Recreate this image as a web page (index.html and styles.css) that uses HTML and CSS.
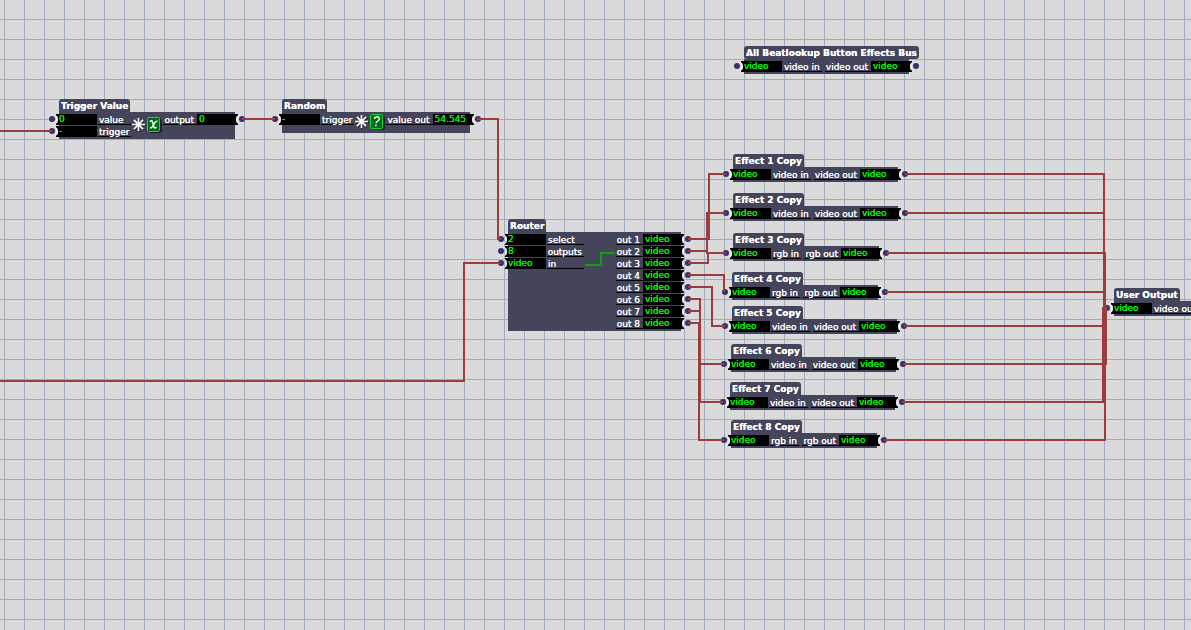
FILE: index.html
```
<!DOCTYPE html>
<html lang="en">
<head>
<meta charset="utf-8">
<title>Patch Editor</title>
<link rel="stylesheet" href="styles.css">
</head>
<body>
<main class="canvas">
  <section class="node trigger-value">
    <h2 class="title">Trigger Value</h2>
    <div class="body">
      <div class="ports in">
        <div class="port"><span class="value">0</span><span class="label">value</span></div>
        <div class="port"><span class="value">-</span><span class="label">trigger</span></div>
      </div>
      <svg class="icons" viewBox="0 0 30 16" aria-hidden="true">
        <path class="star-shadow" d="M8.500 2v13M2 8.500h13M3.900 3.900l9.200 9.200M13.100 3.900l-9.200 9.200"/>
        <path class="star" d="M7.500 1v13M1 7.500h13M2.900 2.900l9.200 9.200M12.100 2.900l-9.200 9.200"/>
        <rect class="chip-shadow" x="18" y="2" width="13" height="14" rx="2"/>
        <rect class="chip" x="16.500" y=".5" width="12" height="14" rx="1"/>
        <path class="glyph" d="M19 4.800c1-1.600 2.200-1.300 2.600.2l1.200 4.800c.4 1.600 1.500 1.600 2.600.2M26.400 4.300c-1.600-.6-2.500.8-3.700 3.100s-2.200 4.100-3.900 3.200"/>
      </svg>
      <div class="ports out">
        <div class="port"><span class="label">output</span><span class="value">0</span></div>
      </div>
    </div>
  </section>

  <section class="node random">
    <h2 class="title">Random</h2>
    <div class="body">
      <div class="ports in">
        <div class="port"><span class="value">-</span><span class="label">trigger</span></div>
      </div>
      <svg class="icons" viewBox="0 0 30 16" aria-hidden="true">
        <path class="star-shadow" d="M8.500 2v13M2 8.500h13M3.900 3.900l9.200 9.200M13.100 3.900l-9.200 9.200"/>
        <path class="star" d="M7.500 1v13M1 7.500h13M2.900 2.900l9.200 9.200M12.100 2.900l-9.200 9.200"/>
        <rect class="chip-shadow" x="18" y="2" width="13" height="14" rx="2"/>
        <rect class="chip" x="16.500" y=".5" width="12" height="14" rx="1"/>
        <path class="glyph" d="M20.500 5c.3-3 5-3 4.800.1c-.2 1.900-2.900 1.900-3.200 4M21.900 10.600v1.600"/>
      </svg>
      <div class="ports out">
        <div class="port"><span class="label">value out</span><span class="value">54.545</span></div>
      </div>
    </div>
  </section>

  <section class="node router">
    <h2 class="title">Router</h2>
    <div class="body">
      <div class="ports in">
        <div class="port"><span class="value">2</span><span class="label">select</span></div>
        <div class="port"><span class="value">8</span><span class="label">outputs</span></div>
        <div class="port"><span class="value">video</span><span class="label">in</span></div>
      </div>
      <div class="ports out">
        <div class="port"><span class="label">out 1</span><span class="value">video</span></div>
        <div class="port"><span class="label">out 2</span><span class="value">video</span></div>
        <div class="port"><span class="label">out 3</span><span class="value">video</span></div>
        <div class="port"><span class="label">out 4</span><span class="value">video</span></div>
        <div class="port"><span class="label">out 5</span><span class="value">video</span></div>
        <div class="port"><span class="label">out 6</span><span class="value">video</span></div>
        <div class="port"><span class="label">out 7</span><span class="value">video</span></div>
        <div class="port"><span class="label">out 8</span><span class="value">video</span></div>
      </div>
    </div>
  </section>

  <section class="node bus">
    <h2 class="title">All Beatlookup Button Effects Bus</h2>
    <div class="body">
      <div class="ports in"><div class="port"><span class="value">video</span><span class="label">video in</span></div></div>
      <div class="ports out"><div class="port"><span class="label">video out</span><span class="value">video</span></div></div>
    </div>
  </section>

  <section class="node effect effect-1">
    <h2 class="title">Effect 1 Copy</h2>
    <div class="body">
      <div class="ports in"><div class="port"><span class="value">video</span><span class="label">video in</span></div></div>
      <div class="ports out"><div class="port"><span class="label">video out</span><span class="value">video</span></div></div>
    </div>
  </section>
  <section class="node effect effect-2">
    <h2 class="title">Effect 2 Copy</h2>
    <div class="body">
      <div class="ports in"><div class="port"><span class="value">video</span><span class="label">video in</span></div></div>
      <div class="ports out"><div class="port"><span class="label">video out</span><span class="value">video</span></div></div>
    </div>
  </section>
  <section class="node effect rgb effect-3">
    <h2 class="title">Effect 3 Copy</h2>
    <div class="body">
      <div class="ports in"><div class="port"><span class="value">video</span><span class="label">rgb in</span></div></div>
      <div class="ports out"><div class="port"><span class="label">rgb out</span><span class="value">video</span></div></div>
    </div>
  </section>
  <section class="node effect rgb effect-4">
    <h2 class="title">Effect 4 Copy</h2>
    <div class="body">
      <div class="ports in"><div class="port"><span class="value">video</span><span class="label">rgb in</span></div></div>
      <div class="ports out"><div class="port"><span class="label">rgb out</span><span class="value">video</span></div></div>
    </div>
  </section>
  <section class="node effect effect-5">
    <h2 class="title">Effect 5 Copy</h2>
    <div class="body">
      <div class="ports in"><div class="port"><span class="value">video</span><span class="label">video in</span></div></div>
      <div class="ports out"><div class="port"><span class="label">video out</span><span class="value">video</span></div></div>
    </div>
  </section>
  <section class="node effect effect-6">
    <h2 class="title">Effect 6 Copy</h2>
    <div class="body">
      <div class="ports in"><div class="port"><span class="value">video</span><span class="label">video in</span></div></div>
      <div class="ports out"><div class="port"><span class="label">video out</span><span class="value">video</span></div></div>
    </div>
  </section>
  <section class="node effect effect-7">
    <h2 class="title">Effect 7 Copy</h2>
    <div class="body">
      <div class="ports in"><div class="port"><span class="value">video</span><span class="label">video in</span></div></div>
      <div class="ports out"><div class="port"><span class="label">video out</span><span class="value">video</span></div></div>
    </div>
  </section>
  <section class="node effect rgb effect-8">
    <h2 class="title">Effect 8 Copy</h2>
    <div class="body">
      <div class="ports in"><div class="port"><span class="value">video</span><span class="label">rgb in</span></div></div>
      <div class="ports out"><div class="port"><span class="label">rgb out</span><span class="value">video</span></div></div>
    </div>
  </section>

  <section class="node user-output">
    <h2 class="title">User Output</h2>
    <div class="body">
      <div class="ports in"><div class="port"><span class="value">video</span><span class="label">video out</span></div></div>
    </div>
  </section>

  <svg class="wires" aria-hidden="true">
    <path d="M0 131H52"/>
    <path d="M0 381H464V263H501"/>
    <path d="M242 119H275"/>
    <path d="M477 119H498V239H501"/>
    <path d="M688 239H709V174H726"/>
    <path d="M688 251H707V213H726"/>
    <path d="M688 263H708V253H726M707 251V254"/>
    <path d="M688 275H724V292"/>
    <path d="M688 287H712V326H725"/>
    <path d="M688 299H700V364H724"/>
    <path d="M688 311H700V402H723"/>
    <path d="M688 323H699V440H724"/>
    <path d="M905 174H1104V308H1107"/>
    <path d="M905 213H1104V308"/>
    <path d="M886 253H1105V308"/>
    <path d="M885 292H1104V308"/>
    <path d="M904 326H1104V308"/>
    <path d="M903 364H1106V308"/>
    <path d="M902 402H1103V308H1107"/>
    <path d="M884 440H1105V308"/>
    <path class="route" d="M585 265H601V253H615"/>
  </svg>
</main>
</body>
</html>
```
FILE: styles.css
```
*, *::before, *::after { box-sizing: border-box; }

body {
  margin: 0;
  overflow: hidden;
  font-family: "DejaVu Sans", Verdana, sans-serif;
  font-size: 9px;
  line-height: 11px;
  color: #fff;
  text-shadow: 0 0 0 currentColor;
}

.canvas {
  position: relative;
  min-height: 100vh;
  overflow: hidden;
  background-color: #dadada;
  background-image:
    linear-gradient(#a0abbe 1px, transparent 1px),
    linear-gradient(90deg, #a0abbe 1px, transparent 1px);
  background-size: 20px 20px;
  background-position: 4px 19px;
}

.node {
  position: absolute;
  display: flex;
  flex-direction: column;
  align-items: flex-start;
}

.title {
  margin: 0;
  padding: 1px 2px 0;
  height: 13px;
  border-radius: 3px 3px 0 0;
  background: #44445a;
  font-size: 9px;
  line-height: 13px;
  font-weight: bold;
  white-space: nowrap;
}

.body {
  display: flex;
  justify-content: space-between;
  align-items: flex-start;
  width: 100%;
  padding: 2px 0;
  background: #44445a;
}

.ports {
  display: flex;
  flex-direction: column;
  gap: 1px;
}
.in { margin-left: -3px; }
.out { margin-right: -3px; }

.port {
  position: relative;
  display: flex;
  gap: 1px;
  height: 11px;
  white-space: nowrap;
}

.value {
  width: 41px;
  padding-left: 3px;
  background: #000;
  color: #00f800;
  line-height: 10px;
  text-shadow: 0 0 0 currentColor;
}
.out .value { padding-left: 2px; }
.out .port { gap: 0; }

.label {
  flex: 1;
  height: 11px;
  padding: 1px 2px 0 1px;
  border-bottom: 1px solid #000;
  line-height: 11px;
}
.out .label { padding-right: 3px; }

/* connector dot with the white socket arc beside it */
.port::before {
  content: "";
  position: absolute;
  top: 2px;
  left: -7px;
  width: 6px;
  height: 6px;
  border-radius: 50%;
  background: #373269;
}
.port::after {
  content: "";
  position: absolute;
  top: 1px;
  left: -2px;
  width: 4px;
  height: 9px;
  border-right: 2px solid #eee;
  border-radius: 0 4px 4px 0;
}
.out .port::before { left: auto; right: -7px; }
.out .port::after {
  left: auto;
  right: -2px;
  border-right: 0;
  border-left: 2px solid #eee;
  border-radius: 4px 0 0 4px;
}

.icons { width: 30px; height: 16px; flex: none; overflow: visible; }
.star, .star-shadow { fill: none; stroke: #fff; stroke-width: 1.6; }
.star-shadow { stroke: #252532; }
.chip-shadow { fill: #20202b; }
.chip { fill: #006b18; stroke: #16d63e; }
.glyph { fill: none; stroke: #e8ffe8; stroke-width: 1.5; }

.trigger-value { left: 59px; top: 99px; width: 176px; }
.trigger-value .body { height: 27px; }
.trigger-value .icons { align-self: center; margin: 0 2px 2px 0; }
.random { left: 282px; top: 99px; width: 188px; }
.random .body { height: 21px; }
.random .icons { margin-right: 2px; }
.router { left: 508px; top: 219px; width: 173px; }
.router .in { width: 79px; }
.bus { left: 744px; top: 46px; width: 165px; }
.bus .title { border-radius: 3px; }
.effect { width: 165px; }
.rgb { width: 146px; }
.effect-1 { left: 733px; top: 154px; }
.effect-2 { left: 733px; top: 193px; }
.effect-3 { left: 733px; top: 233px; }
.effect-4 { left: 732px; top: 272px; }
.effect-5 { left: 732px; top: 306px; }
.effect-6 { left: 731px; top: 344px; }
.effect-7 { left: 730px; top: 382px; }
.effect-8 { left: 731px; top: 420px; }
.user-output { left: 1114px; top: 288px; width: 165px; }

.wires {
  position: absolute;
  inset: 0;
  width: 100%;
  height: 100%;
  fill: none;
  stroke: #993d3d;
  stroke-width: 2;
  pointer-events: none;
}
.route { stroke: #00a800; }
```
